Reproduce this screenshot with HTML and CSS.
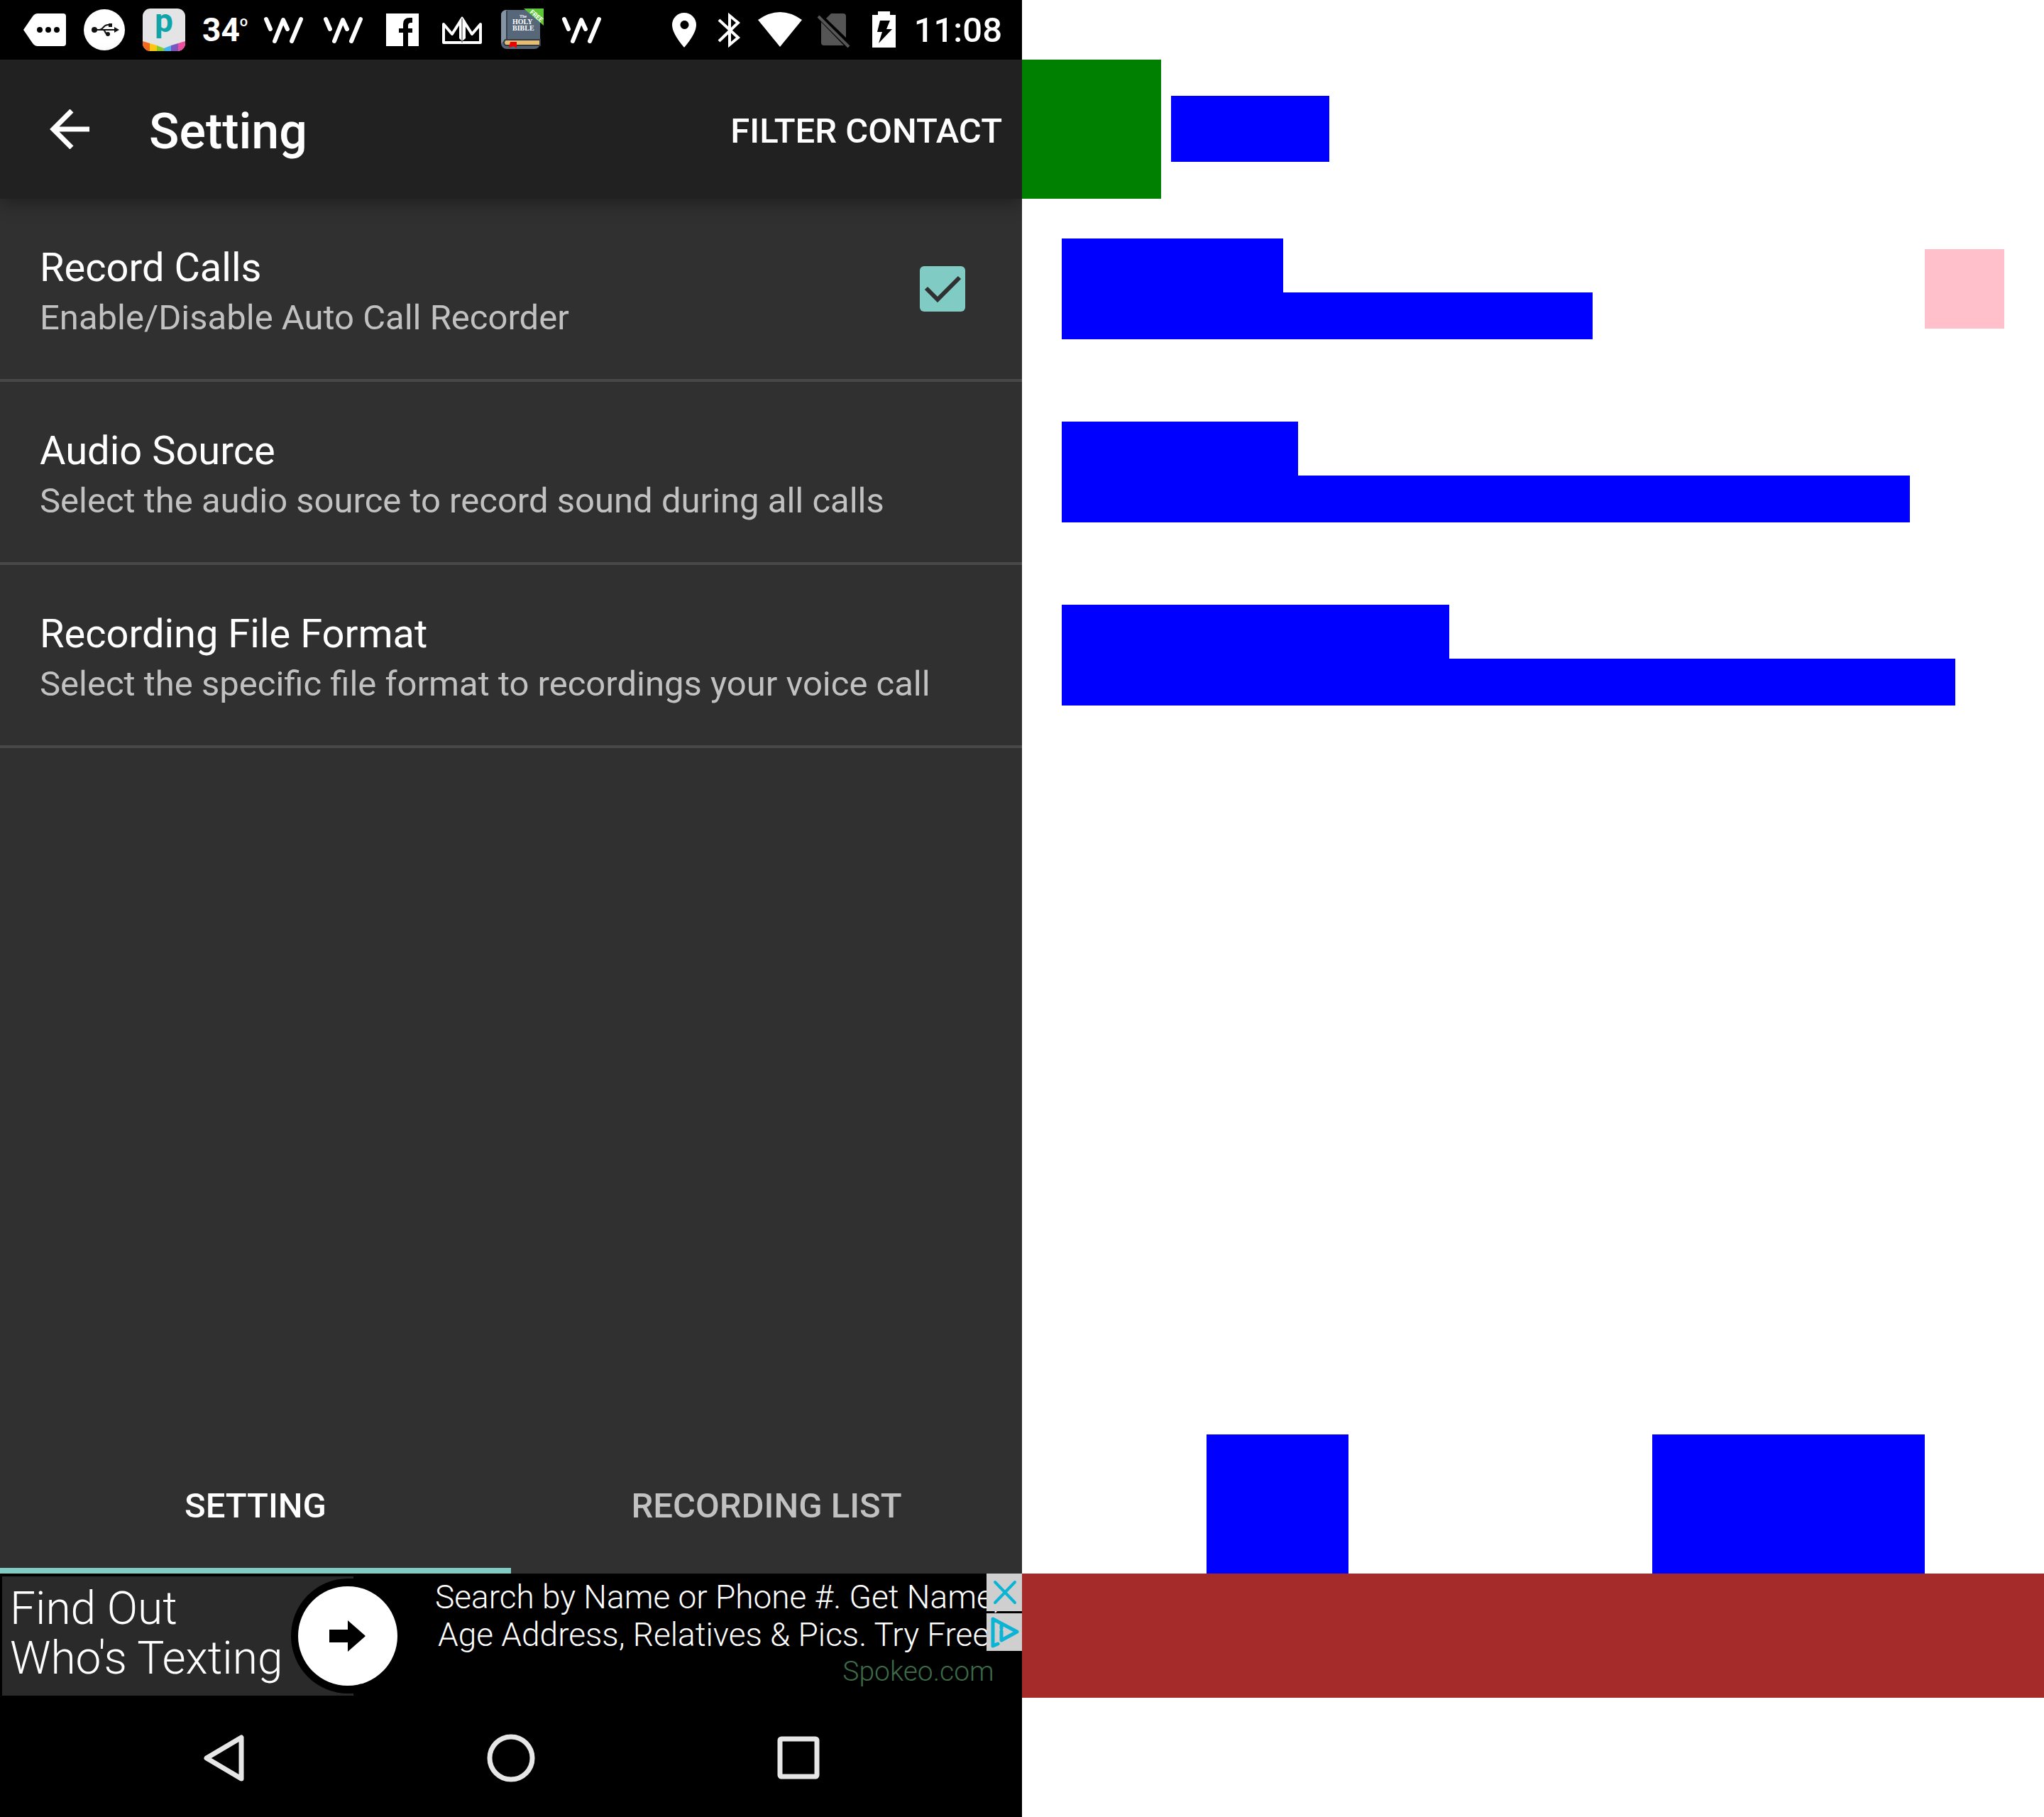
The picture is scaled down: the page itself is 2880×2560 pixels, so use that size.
FILE: index.html
```html
<!DOCTYPE html>
<html lang="en">
<head>
<meta charset="utf-8">
<title>Setting</title>
<link rel="stylesheet" href="styles.css">
</head>
<body>
<div class="split">
  <main class="phone">
    <div class="status">
      <div class="notifications">
        <svg class="cell" viewBox="21 0 84 84"><path d="M33 42L46 23Q49 19 53 19H89Q93 19 93 23V61Q93 65 89 65H53Q49 65 46 61Z" fill="#fff"/><g fill="#000"><circle cx="56" cy="42" r="4"/><circle cx="68" cy="42" r="4"/><circle cx="80" cy="42" r="4"/></g></svg>
        <svg class="cell" viewBox="105 0 84 84"><circle cx="147" cy="42" r="29" fill="#fff"/><g fill="none" stroke="#111" stroke-width="2"><path d="M132 42H163M140 42C146 42 145 35 152 35H155M145 42C149 42 147 48 152 48"/></g><g fill="#111"><circle cx="133" cy="42" r="4"/><path d="M161 38L168 42L161 46Z"/><rect x="153" y="33" width="5" height="5"/><circle cx="152" cy="48" r="3"/></g></svg>
        <svg class="cell" viewBox="189 0 84 84"><defs><clipPath id="tile"><rect x="201" y="12" width="60" height="60" rx="11"/></clipPath></defs><g clip-path="url(#tile)"><path fill="#e4e4e6" d="M201 12h60v60h-60z"/><path fill="#f26a1b" d="M201 58l10 3v11h-10z"/><path fill="#ffc90e" d="M211 61l10 3v8h-10z"/><path fill="#8ad02a" d="M221 64l10 4v4h-10z"/><path fill="#45b6f2" d="M231 68l10-4v8h-10z"/><path fill="#7d57c1" d="M241 64l10-3v11h-10z"/><path fill="#ee4fa0" d="M251 61l10-3v14h-10z"/></g><text class="p-letter" x="231" y="45" text-anchor="middle">p</text></svg>
        <span class="cell temp">34<sup>o</sup></span>
        <svg class="cell" viewBox="357 0 84 84"><path class="w-mark" d="M375 27L381 41M387 58L399 28L405 41M411 58L424 27"/></svg>
        <svg class="cell" viewBox="357 0 84 84"><path class="w-mark" d="M375 27L381 41M387 58L399 28L405 41M411 58L424 27"/></svg>
        <svg class="cell" viewBox="525 0 84 84"><path fill="#fff" d="M544 19H590V65H575V46H581V40H575V36Q575 32 579 32H581V25H577Q568 25 568 34V40H562V46H568V65H544Z"/></svg>
        <svg class="cell" viewBox="609 0 84 84"><path fill="none" stroke="#fff" stroke-width="4" stroke-linejoin="round" d="M625 60V34L637 48L651 26L665 48L677 34V60Z"/><path fill="#fff" d="M647 30L651 23L656 30V54L651 58L647 54Z"/><path d="M651 26V60" stroke="#333" stroke-width="1"/></svg>
        <svg class="cell" viewBox="693 0 84 84"><rect x="706" y="14" width="55" height="55" rx="8" fill="#56677a"/><path d="M706 22q0-8 8-8v44q-8 0-8 5z" fill="#8593a2"/><path d="M714 15v40" stroke="#35424f" stroke-width="2"/><path fill="#e8bd72" stroke="#333c46" stroke-width="2" d="M712 56H761V64H712Q708 60 712 56Z"/><path fill="#e00" d="M719 59H728V68L724 65L717 67Z"/><path fill="#5cc636" d="M738 12H766V36Z"/><g class="book-text"><text class="book-the" x="732" y="25">The</text><text x="722" y="34">HOLY</text><text x="722" y="43">BIBLE</text></g><text class="book-free" x="746" y="18" transform="rotate(41 746 18)">FREE</text></svg>
        <svg class="cell" viewBox="357 0 84 84"><path class="w-mark" d="M375 27L381 41M387 58L399 28L405 41M411 58L424 27"/></svg>
      </div>
      <div class="system">
        <svg width="64" height="84" viewBox="933 0 64 84"><path fill="#fff" fill-rule="evenodd" d="M964 18a17 17 0 0 1 17 17Q981 47 964 67Q947 47 947 35A17 17 0 0 1 964 18ZM964 29a6 6 0 1 0 1 0Z"/></svg>
        <svg width="62" height="84" viewBox="997 0 62 84"><path fill="none" stroke="#fff" stroke-width="4" d="M1013 28L1040 53L1028 63V22L1040 32L1013 58"/></svg>
        <svg width="80" height="84" viewBox="1059 0 80 84"><path fill="#fff" d="M1068 28Q1099 6 1130 28L1099 66Z"/></svg>
        <svg width="71" height="84" viewBox="1139 0 71 84"><path fill="#555" d="M1171 19H1188Q1192 19 1192 23V53L1164 26ZM1157 31L1189 64H1161Q1157 64 1157 60Z"/><path d="M1153 23L1196 66" stroke="#555" stroke-width="4"/></svg>
        <svg width="70" height="84" viewBox="1210 0 70 84"><path fill="#fff" d="M1237 16H1254V21H1262V67H1229V21H1237Z"/><path fill="#000" d="M1240 29H1254L1249 41H1257L1238 61L1243 45H1236Z"/></svg>
        <time class="clock">11:08</time>
      </div>
    </div>
    <header class="appbar">
      <button class="back" aria-label="Back"><svg width="56" height="56" viewBox="0 0 56 56"><path fill="none" stroke="#fff" stroke-width="7" d="M56 28H6M31 2L5 28L31 54"/></svg></button>
      <h1 class="title">Setting</h1>
      <button class="action">FILTER CONTACT</button>
    </header>
    <section class="prefs">
      <label class="pref">
        <span class="pref-text"><span class="pref-title">Record Calls</span><span class="pref-sub">Enable/Disable Auto Call Recorder</span></span>
        <span class="check"><input type="checkbox" checked><svg viewBox="0 0 64 64"><path d="M9 31L25 47L56 16" fill="none" stroke="#303030" stroke-width="6"/></svg></span>
      </label>
      <div class="pref"><span class="pref-text"><span class="pref-title">Audio Source</span><span class="pref-sub">Select the audio source to record sound during all calls</span></span></div>
      <div class="pref"><span class="pref-text"><span class="pref-title">Recording File Format</span><span class="pref-sub">Select the specific file format to recordings your voice call</span></span></div>
    </section>
    <nav class="tabs">
      <button class="tab tab-on">SETTING</button>
      <button class="tab">RECORDING LIST</button>
    </nav>
    <aside class="ad">
      <div class="ad-head">Find Out<br>Who's Texting</div>
      <svg class="ad-go" viewBox="0 0 162 168"><path fill="#000" d="M88 3H80A80 81 0 0 0 80 165H88V168H162V0H88Z"/><circle cx="80" cy="84" r="70" fill="#fff"/><path fill="#000" d="M54 75H80V62L105 84L80 106V93H54Z"/></svg>
      <div class="ad-copy"><p>Search by Name or Phone #. Get Name,</p><p class="ad-second">Age Address, Relatives &amp; Pics. Try Free</p><a class="ad-link" href="#">Spokeo.com</a></div>
      <div class="ad-badges">
        <button class="badge" aria-label="Close ad"><svg viewBox="0 0 50 53"><path d="M12 12L40 41M40 12L12 41" fill="none" stroke="#0bb4d4" stroke-width="4" stroke-linecap="round"/></svg></button>
        <button class="badge" aria-label="Ad choices"><svg viewBox="0 0 50 53"><path d="M16 43L9 46V8L43 26L21 38V25M21 18V21" fill="none" stroke="#0bb4d4" stroke-width="5" stroke-linejoin="round" stroke-linecap="round"/></svg></button>
      </div>
    </aside>
    <nav class="sysnav">
      <button aria-label="Back"><svg viewBox="0 0 80 80"><path d="M64 12V70L15 41Z"/></svg></button>
      <button aria-label="Home"><svg viewBox="0 0 80 80"><circle cx="40" cy="41" r="30"/></svg></button>
      <button aria-label="Recents"><svg viewBox="0 0 80 80"><rect x="15" y="14" width="52" height="53" rx="2"/></svg></button>
    </nav>
  </main>
  <section class="wire" aria-hidden="true">
    <div class="wire-bar"><div class="w-icon"></div><div class="w-title"></div></div>
    <div class="wire-rows">
      <div class="wire-row"><div><div class="w-line a1"></div><div class="w-sub a2"></div></div><div class="w-check"></div></div>
      <div class="wire-row"><div><div class="w-line b1"></div><div class="w-sub b2"></div></div></div>
      <div class="wire-row"><div><div class="w-line c1"></div><div class="w-sub c2"></div></div></div>
    </div>
    <div class="wire-tabs"><div><div class="w-tab t1"></div></div><div><div class="w-tab t2"></div></div></div>
    <div class="w-ad"></div>
    <div class="w-foot"></div>
  </section>
</div>
</body>
</html>
```
FILE: styles.css
```css
* { box-sizing: border-box; }
body { margin: 0; background: #fff; font-family: Roboto, "Liberation Sans", sans-serif; }
button { margin: 0; padding: 0; border: 0; background: none; color: inherit; font: inherit; }
svg { display: block; flex: none; }
h1, p { margin: 0; }

.split { display: grid; grid-template-columns: 1fr 1fr; min-height: 100vh; }
.phone { display: flex; flex-direction: column; min-width: 0; overflow: hidden; background: #303030; color: #fff; }

.status { display: flex; justify-content: space-between; height: 84px; padding: 0 28px 0 21px; background: #000; }
.notifications, .system { display: flex; align-items: center; }
.cell { flex: none; width: 84px; height: 84px; }
.temp { display: flex; padding-left: 12px; font-size: 46px; line-height: 84px; font-weight: 700; }
.temp sup { font-size: 20px; line-height: 60px; font-weight: 500; }
.w-mark { fill: none; stroke: #fff; stroke-width: 6; stroke-linecap: round; stroke-linejoin: round; }
.p-letter { font: 700 46px Roboto, sans-serif; fill: #0fa5a8; }
.book-text { font: 700 10px "Liberation Serif", serif; fill: #fff; }
.book-the { font-size: 6px; }
.book-free { font: 700 9px Roboto, sans-serif; fill: #fff; }
.clock { width: 132px; padding-top: 2px; font-size: 49px; line-height: 84px; font-weight: 500; text-align: right; }

.appbar { position: relative; display: flex; align-items: center; height: 196px; padding: 0 28px 0 70px; background: #212121; box-shadow: 0 6px 24px rgba(0, 0, 0, .35); }
.back { width: 140px; }
.title { flex: 1; padding-top: 6px; font-size: 70px; line-height: 92px; font-weight: 500; }
.action { padding-top: 6px; font-size: 49px; line-height: 64px; font-weight: 500; }

.prefs { flex: 1; }
.pref { display: flex; align-items: center; justify-content: space-between; height: 258px; padding: 0 56px; border-bottom: 4px solid #484848; }
.pref-text { display: flex; flex-direction: column; padding-top: 6px; }
.pref-title { font-size: 56px; line-height: 76px; }
.pref-sub { font-size: 49px; line-height: 66px; color: #c1c1c1; }
.check { display: grid; width: 112px; height: 112px; place-items: center; }
.check > * { grid-area: 1 / 1; width: 64px; height: 64px; margin: 0; }
.check input { appearance: none; border-radius: 6px; background: #80cbc4; }
.check svg { z-index: 1; pointer-events: none; }

.tabs { display: grid; grid-template-columns: 1fr 1fr; height: 196px; }
.tab { padding-top: 12px; border-bottom: 8px solid transparent; font-size: 49px; font-weight: 500; color: #c1c1c1; }
.tab-on { border-color: #80cbc4; color: #fff; }

.ad { position: relative; display: flex; height: 175px; padding: 4px 42px 3px 3px; background: #000; font-weight: 300; }
.ad-head { flex: none; width: 407px; padding: 11px 0 0 11px; background: #2a2a2a; font-size: 64px; line-height: 70px; white-space: nowrap; }
.ad-go { width: 162px; height: 168px; background: #2a2a2a; }
.ad-copy { flex: 1; padding: 3px 0 0 41px; font-size: 46px; line-height: 53px; white-space: nowrap; }
.ad-second { padding-left: 4px; }
.ad-link { display: block; margin-right: 8px; color: #3c6b48; font-size: 39px; line-height: 50px; text-align: right; text-decoration: none; }
.ad-badges { position: absolute; top: 0; right: 0; display: grid; gap: 3px; }
.badge { width: 50px; height: 53px; background: #cfcfcf; }

.sysnav { display: flex; align-items: center; justify-content: center; gap: 324px; height: 168px; background: #000; }
.sysnav svg { width: 80px; height: 80px; fill: none; stroke: #e6e6e6; stroke-width: 7; stroke-linejoin: round; }

.wire { display: flex; flex-direction: column; min-width: 0; padding-top: 84px; }
.wire-bar { display: flex; align-items: center; gap: 14px; height: 196px; }
.w-icon { width: 196px; height: 196px; background: green; }
.w-title { width: 223px; height: 93px; margin-bottom: 1px; background: blue; }
.wire-rows { flex: 1; }
.wire-row { display: flex; align-items: center; justify-content: space-between; height: 258px; padding: 0 56px 4px; }
.w-line { height: 76px; background: blue; }
.w-sub { height: 66px; background: blue; }
.a1 { width: 312px; }
.a2 { width: 748px; }
.b1 { width: 333px; }
.b2 { width: 1195px; }
.c1 { width: 546px; }
.c2 { width: 1259px; }
.w-check { width: 112px; height: 112px; background: pink; }
.wire-tabs { display: grid; grid-template-columns: 1fr 1fr; }
.w-tab { height: 196px; margin: 0 auto; background: blue; }
.t1 { width: 200px; }
.t2 { width: 384px; }
.w-ad { height: 175px; background: brown; }
.w-foot { height: 168px; }
```
